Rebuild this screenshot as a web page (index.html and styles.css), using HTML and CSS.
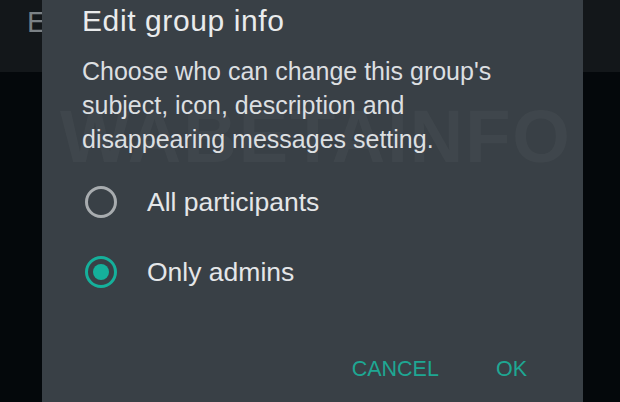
FILE: index.html
```html
<!DOCTYPE html>
<html lang="en">
<head>
    <meta charset="UTF-8">
    <meta name="viewport" content="width=device-width, initial-scale=1.0">
    <title>Edit group info</title>
    <link rel="stylesheet" href="styles.css">
</head>
<body>
    <div class="screen">
        <div class="app-bar">
            <span class="app-title">E</span>
        </div>

        <div class="dialog">
            <h1 class="dialog-title">Edit group info</h1>
            <p class="dialog-text">Choose who can change this group's subject, icon, description and disappearing messages setting.</p>

            <div class="options">
                <label class="option">
                    <span class="radio"></span>
                    <span class="option-label">All participants</span>
                </label>
                <label class="option">
                    <span class="radio checked"></span>
                    <span class="option-label">Only admins</span>
                </label>
            </div>

            <div class="actions">
                <button class="action">CANCEL</button>
                <button class="action">OK</button>
            </div>
        </div>

        <div class="watermark">WABETAINFO</div>
    </div>
</body>
</html>
```

FILE: styles.css
```css
html, body {
    margin: 0;
    height: 100%;
}
body {
    font-family: "Liberation Sans", Arial, sans-serif;
    background-color: #04080b;
    overflow: hidden;
}
.screen {
    position: relative;
    height: 402px;
}
.app-bar {
    height: 72px;
    background-color: #13171a;
    padding-left: 27px;
}
.app-title {
    display: inline-block;
    font-size: 29px;
    line-height: 44px;
    color: #7b8185;
}
.dialog {
    position: absolute;
    top: 0;
    left: 42px;
    width: 541px;
    height: 420px;
    background-color: #394046;
    box-sizing: border-box;
    padding: 1px 0 0 40px;
}
.dialog-title {
    margin: 0;
    font-size: 30px;
    font-weight: normal;
    line-height: 40px;
    color: #e9ebec;
    letter-spacing: 0.6px;
}
.dialog-text {
    margin: 13px 0 0;
    width: 440px;
    font-size: 25px;
    line-height: 34px;
    color: #dcdfe1;
}
.options {
    margin-top: 11px;
}
.option {
    display: flex;
    align-items: center;
    height: 70px;
    padding-left: 3px;
    gap: 30px;
}
.radio {
    width: 26px;
    height: 26px;
    border: 3px solid #a8acaf;
    border-radius: 50%;
    display: flex;
    align-items: center;
    justify-content: center;
}
.radio.checked {
    border-color: #15b09b;
}
.radio.checked::after {
    content: "";
    width: 16px;
    height: 16px;
    border-radius: 50%;
    background-color: #15b09b;
}
.option-label {
    font-size: 26.5px;
    color: #e4e6e8;
}
.actions {
    display: flex;
    justify-content: flex-end;
    gap: 57px;
    margin-top: 38px;
    padding-right: 56px;
    height: 48px;
    align-items: center;
}
.action {
    background: none;
    border: none;
    padding: 0;
    font-family: inherit;
    font-size: 21.5px;
    color: #1ea793;
}
.watermark {
    position: absolute;
    top: 94px;
    left: 60px;
    font-size: 74px;
    font-weight: bold;
    color: rgba(255, 255, 255, 0.035);
    letter-spacing: 2px;
    pointer-events: none;
}
```
